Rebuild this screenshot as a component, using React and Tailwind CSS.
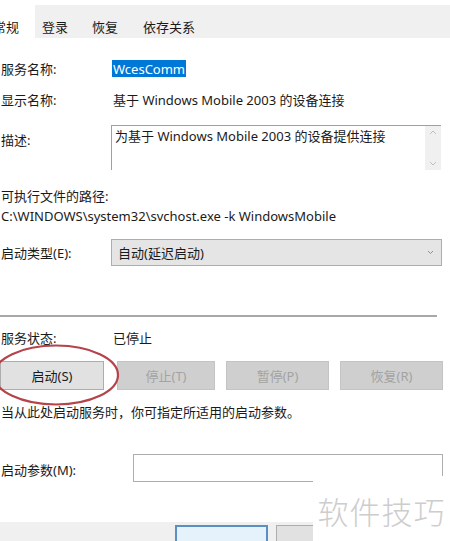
import React from 'react';

const Label = ({ children, className = '' }) => (
  <div className={`w-[112px] shrink-0 ${className}`}>{children}</div>
);

const Btn = ({ children, disabled, className = '' }) => (
  <div
    className={`h-[29px] flex items-center justify-center border ${
      disabled ? 'bg-[#cfcfcf] border-[#c4c4c4] text-[#a3a3a3]' : 'bg-[#e1e1e1] border-[#adadad] text-[#1a1a1a]'
    } ${className}`}
  >
    {children}
  </div>
);

const App = () => {
  return (
    <div className="relative w-[450px] h-[541px] overflow-hidden bg-white text-[13px] leading-[16px] text-[#1a1a1a] font-['Noto_Sans','Noto_Sans_CJK_SC',sans-serif]">
      {/* Tab strip */}
      <div className="mt-[5px] h-[33px] bg-[#f0f0f0] flex">
        <div className="w-[35px] h-[35px] -mt-[2px] bg-white pt-[16px] overflow-hidden">
          <span className="block -ml-[7px] whitespace-nowrap">常规</span>
        </div>
        <div className="pt-[14px] ml-[7px]">登录</div>
        <div className="pt-[14px] ml-[24px]">恢复</div>
        <div className="pt-[14px] ml-[25px]">依存关系</div>
      </div>

      {/* General page */}
      <div className="pl-[1px]">
        <div className="flex mt-[22px] h-[17px] items-center">
          <Label>服务名称:</Label>
          <span className="bg-[#0078d7] text-white h-[17px] px-[1px] -ml-[1px] flex items-center">WcesComm</span>
        </div>

        <div className="flex mt-[15px]">
          <Label>显示名称:</Label>
          <span>基于 Windows Mobile 2003 的设备连接</span>
        </div>

        <div className="flex mt-[17px] items-start">
          <Label className="pt-[7px]">描述:</Label>
          <div className="flex w-[330px] h-[45px] -ml-[2px] border-t border-l border-[#a0a0a0]">
            <div className="flex-1 pt-[2px] pl-[3px]">为基于 Windows Mobile 2003 的设备提供连接</div>
            <div className="w-[16px] bg-[#f0f0f0] flex flex-col justify-between items-center py-[3px] text-[#c0c0c0]">
              <svg width="8" height="6" viewBox="0 0 8 6"><path d="M1 5 L4 2 L7 5" fill="none" stroke="currentColor" strokeWidth="1" /></svg>
              <svg width="8" height="6" viewBox="0 0 8 6"><path d="M1 1 L4 4 L7 1" fill="none" stroke="currentColor" strokeWidth="1" /></svg>
            </div>
          </div>
        </div>

        <div className="mt-[18px]">可执行文件的路径:</div>
        <div className="mt-[4px] whitespace-nowrap">C:\WINDOWS\system32\svchost.exe -k WindowsMobile</div>

        <div className="flex mt-[15px] items-center">
          <Label>启动类型(E):</Label>
          <div className="w-[331px] h-[27px] -ml-[2px] bg-[#e5e5e5] border border-[#adadad] flex items-center justify-between pl-[6px] pr-[7px]">
            <span>自动(延迟启动)</span>
            <svg width="7" height="5" viewBox="0 0 7 5" className="text-[#909090]"><path d="M1 1 L3.5 3.5 L6 1" fill="none" stroke="currentColor" strokeWidth="1" /></svg>
          </div>
        </div>

        <div className="mt-[49px] w-[437px] -ml-[1px] h-[2px] bg-[#a8a8a8]" />

        <div className="flex mt-[13px]">
          <Label>服务状态:</Label>
          <span>已停止</span>
        </div>

        <div className="flex mt-[15px] -ml-[1px]">
          <Btn className="w-[104px]">启动(S)</Btn>
          <Btn disabled className="w-[98px] ml-[13px]">停止(T)</Btn>
          <Btn disabled className="w-[103px] ml-[11px]">暂停(P)</Btn>
          <Btn disabled className="w-[103px] ml-[11px]">恢复(R)</Btn>
        </div>

        <div className="mt-[14px]">当从此处启动服务时，你可指定所适用的启动参数。</div>

        <div className="flex mt-[34px] items-center">
          <Label className="w-[132px] pt-[4px]">启动参数(M):</Label>
          <div className="w-[310px] h-[28px] border border-[#adadad] bg-white" />
        </div>
      </div>

      {/* Bottom button strip */}
      <div className="absolute left-0 right-0 top-[522px] bottom-0 bg-[#f0f0f0]">
        <div className="absolute left-[175px] top-[3px] w-[93px] h-[30px] border-2 border-[#5a8fc4] bg-[#e5f1fb]" />
        <div className="absolute left-[276px] top-[3px] w-[60px] h-[30px] border border-[#adadad] bg-[#e1e1e1]" />
      </div>

      {/* Red circle annotation */}
      <svg className="absolute left-[-8px] top-[343px]" width="130" height="64" viewBox="0 0 130 64">
        <ellipse cx="64" cy="32" rx="62" ry="29.5" fill="none" stroke="#b5434a" strokeWidth="2.2" />
      </svg>

      {/* Watermark */}
      <div className="absolute left-[313px] top-[476px] right-0 bottom-0 bg-white flex items-center justify-center pt-[4px]">
        <span className="text-[31px] leading-[36px] text-[#cdcdcd] font-light tracking-[1px] font-['Noto_Sans_CJK_SC',sans-serif]">软件技巧</span>
      </div>
    </div>
  );
};

export default App;
